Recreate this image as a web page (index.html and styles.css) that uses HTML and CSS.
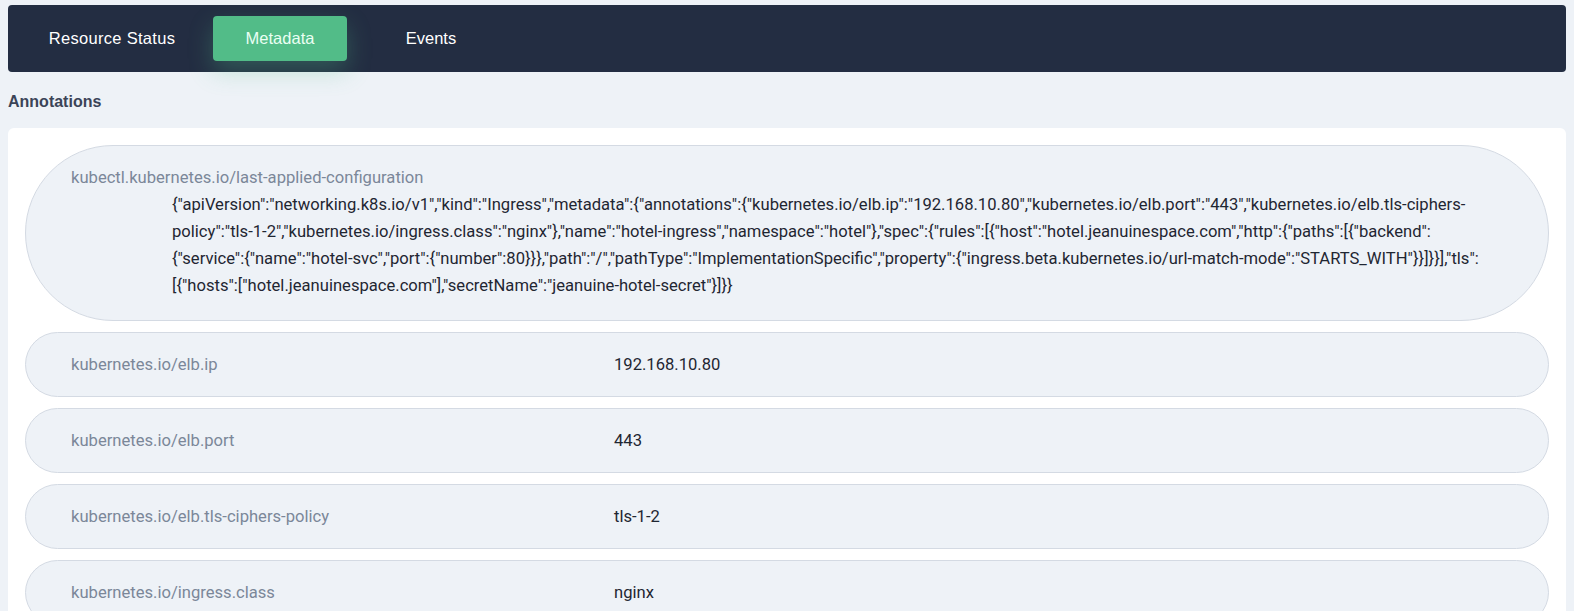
FILE: index.html
```html
<!DOCTYPE html>
<html lang="en">
<head>
<meta charset="utf-8">
<title>Metadata</title>
<link rel="stylesheet" href="styles.css">
</head>
<body>
<nav class="tabs">
  <a class="tab tab-status">Resource Status</a>
  <a class="tab tab-meta active">Metadata</a>
  <a class="tab tab-events">Events</a>
</nav>
<h2 class="section-title">Annotations</h2>
<div class="card">
  <div class="row row-long">
    <div class="key">kubectl.kubernetes.io/last-applied-configuration</div>
    <div class="value">{"apiVersion":"networking.k8s.io/v1","kind":"Ingress","metadata":{"annotations":{"kubernetes.io/elb.ip":"192.168.10.80","kubernetes.io/elb.port":"443","kubernetes.io/elb.tls-ciphers-<br>policy":"tls-1-2","kubernetes.io/ingress.class":"nginx"},"name":"hotel-ingress","namespace":"hotel"},"spec":{"rules":[{"host":"hotel.jeanuinespace.com","http":{"paths":[{"backend":<br>{"service":{"name":"hotel-svc","port":{"number":80}}},"path":"/","pathType":"ImplementationSpecific","property":{"ingress.beta.kubernetes.io/url-match-mode":"STARTS_WITH"}}]}}],"tls":<br>[{"hosts":["hotel.jeanuinespace.com"],"secretName":"jeanuine-hotel-secret"}]}}</div>
  </div>
  <div class="row">
    <div class="key">kubernetes.io/elb.ip</div>
    <div class="value">192.168.10.80</div>
  </div>
  <div class="row">
    <div class="key">kubernetes.io/elb.port</div>
    <div class="value">443</div>
  </div>
  <div class="row">
    <div class="key">kubernetes.io/elb.tls-ciphers-policy</div>
    <div class="value">tls-1-2</div>
  </div>
  <div class="row">
    <div class="key">kubernetes.io/ingress.class</div>
    <div class="value">nginx</div>
  </div>
</div>
</body>
</html>
```

FILE: styles.css
```css
* { box-sizing: border-box; }
html, body { margin: 0; }
body {
  background: #eef2f7;
  padding: 5px 8px 0;
  font-family: "Liberation Sans", Arial, sans-serif;
  overflow: hidden;
  height: 611px;
}
.tabs {
  display: flex;
  align-items: center;
  gap: 5px;
  height: 67px;
  padding: 0 8px;
  background: #232d42;
  border-radius: 4px;
}
.tab {
  display: flex;
  align-items: center;
  justify-content: center;
  height: 45px;
  border-radius: 4px;
  color: #ffffff;
  font-size: 16.5px;
  cursor: pointer;
}
.tab-status { width: 192px; letter-spacing: 0.3px; }
.tab-meta { width: 134px; }
.tab-events { width: 158px; }
.tab.active {
  background: #52bc88;
  color: #eafff3;
  box-shadow: 0 10px 24px rgba(82, 188, 136, 0.3);
}
.section-title {
  margin: 18px 0 14px;
  font-size: 16px;
  line-height: 24px;
  font-weight: bold;
  color: #3b4457;
}
.card {
  background: #ffffff;
  border-radius: 6px;
  padding: 17px;
  display: flex;
  flex-direction: column;
  gap: 11px;
}
.row {
  display: flex;
  flex-wrap: wrap;
  background: #eef2f7;
  border: 1px solid #d4dae3;
  border-radius: 9999px;
  padding: 18px 45px;
  font-family: Roboto, "Liberation Sans", sans-serif;
  font-size: 16.6px;
  line-height: 27px;
}
.key {
  flex: 0 0 543px;
  color: #7b8799;
}
.value {
  flex: 1 1 auto;
  color: #1f2632;
}
.row-long { padding-bottom: 21px; }
.row-long .key { flex-basis: 100%; }
.row-long .value {
  flex-basis: 100%;
  padding-left: 101px;
}
```
